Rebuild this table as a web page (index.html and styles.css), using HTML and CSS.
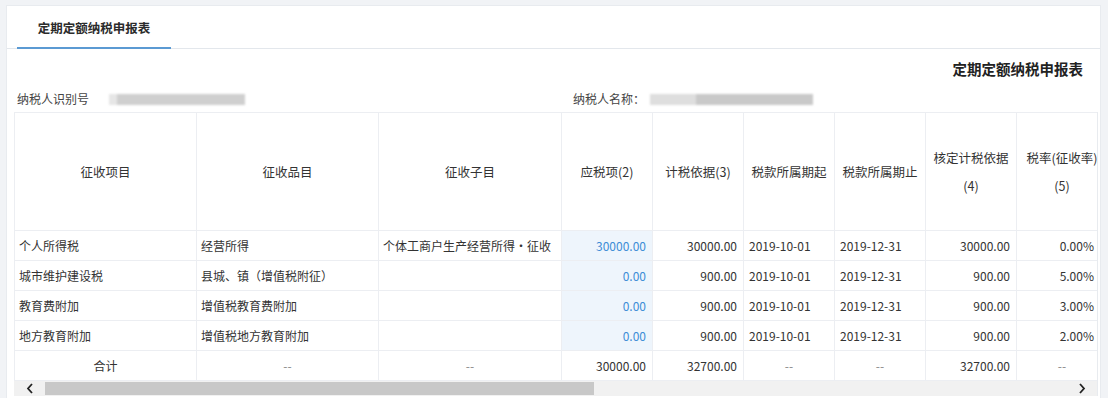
FILE: index.html
```html
<!DOCTYPE html>
<html lang="zh-CN">
<head>
<meta charset="utf-8">
<title>定期定额纳税申报表</title>
<link rel="stylesheet" href="styles.css">
</head>
<body>
<div class="card">
  <div class="tabbar">
    <div class="tab">定期定额纳税申报表</div>
  </div>
  <div class="title-row">定期定额纳税申报表</div>
  <div class="info-row">
    <div class="info info-id"><span>纳税人识别号</span><span class="mask mask-id"><i class="m1"></i><i class="m2"></i></span></div>
    <div class="info info-name"><span>纳税人名称：</span><span class="mask mask-name"><i class="m1"></i><i class="m2"></i></span></div>
  </div>
  <div class="grid-wrap">
    <div class="grid-clip">
      <table class="grid">
        <colgroup>
          <col class="c-wide"><col class="c-wide"><col class="c-wide2">
          <col class="c-num"><col class="c-num"><col class="c-num"><col class="c-num"><col class="c-num"><col class="c-num">
        </colgroup>
        <thead>
          <tr>
            <th>征收项目</th>
            <th>征收品目</th>
            <th>征收子目</th>
            <th>应税项(2)</th>
            <th>计税依据(3)</th>
            <th>税款所属期起</th>
            <th>税款所属期止</th>
            <th class="two">核定计税依据<br>(4)</th>
            <th class="two">税率(征收率)<br>(5)</th>
          </tr>
        </thead>
        <tbody>
          <tr>
            <td>个人所得税</td><td>经营所得</td><td class="clip">个体工商户生产经营所得・征收</td>
            <td class="num edit">30000.00</td><td class="num">30000.00</td>
            <td class="date">2019-10-01</td><td class="date">2019-12-31</td>
            <td class="num">30000.00</td><td class="num last">0.00%</td>
          </tr>
          <tr>
            <td>城市维护建设税</td><td>县城、镇（增值税附征）</td><td></td>
            <td class="num edit">0.00</td><td class="num">900.00</td>
            <td class="date">2019-10-01</td><td class="date">2019-12-31</td>
            <td class="num">900.00</td><td class="num last">5.00%</td>
          </tr>
          <tr>
            <td>教育费附加</td><td>增值税教育费附加</td><td></td>
            <td class="num edit">0.00</td><td class="num">900.00</td>
            <td class="date">2019-10-01</td><td class="date">2019-12-31</td>
            <td class="num">900.00</td><td class="num last">3.00%</td>
          </tr>
          <tr>
            <td>地方教育附加</td><td>增值税地方教育附加</td><td></td>
            <td class="num edit">0.00</td><td class="num">900.00</td>
            <td class="date">2019-10-01</td><td class="date">2019-12-31</td>
            <td class="num">900.00</td><td class="num last">2.00%</td>
          </tr>
          <tr class="total">
            <td class="center">合计</td><td class="center dash">--</td><td class="center dash">--</td>
            <td class="num">30000.00</td><td class="num">32700.00</td>
            <td class="center dash">--</td><td class="center dash">--</td>
            <td class="num">32700.00</td><td class="center dash">--</td>
          </tr>
        </tbody>
      </table>
    </div>
    <div class="hscroll">
      <span class="arrow"><svg width="8" height="11" viewBox="0 0 8 11"><path d="M6 1 L2 5.5 L6 10" fill="none" stroke="#222" stroke-width="1.8"/></svg></span>
      <div class="track"><div class="thumb"></div></div>
      <span class="arrow"><svg width="8" height="11" viewBox="0 0 8 11"><path d="M2 1 L6 5.5 L2 10" fill="none" stroke="#222" stroke-width="1.8"/></svg></span>
    </div>
  </div>
</div>
</body>
</html>
```

FILE: styles.css
```css
html, body {
  margin: 0;
  padding: 0;
  height: 398px;
  overflow: hidden;
  background: #f1f3f6;
  font-family: "Noto Sans CJK SC", "Noto Sans", sans-serif;
  color: #333;
}

.card {
  margin: 5px 7px 0 6px;
  height: 393px;
  background: #fff;
  border: 1px solid #e8ebef;
  border-bottom: none;
  box-sizing: border-box;
  padding: 0 3px 0 7px;
}

.tabbar {
  display: flex;
  border-bottom: 1px solid #e3e7ec;
  height: 42px;
  margin-left: -7px;
  margin-right: -3px;
  padding-left: 10px;
}

.tab {
  width: 154px;
  box-sizing: border-box;
  padding-top: 3px;
  height: 43px;
  line-height: 38px;
  text-align: center;
  font-size: 12.5px;
  font-weight: bold;
  color: #2b2b2b;
  border-bottom: 2px solid #5b9ad3;
}

.title-row {
  height: 40px;
  line-height: 40px;
  text-align: right;
  padding-right: 14px;
  font-size: 14.5px;
  font-weight: bold;
  color: #222;
}

.info-row {
  display: flex;
  height: 20px;
  line-height: 20px;
  font-size: 12px;
  color: #444;
}

.info {
  display: flex;
  align-items: center;
}

.info-id {
  width: 556px;
  padding-left: 3px;
}

.mask {
  display: flex;
  height: 11px;
  filter: blur(1px);
}

.mask i {
  display: block;
  height: 11px;
}

.mask-id {
  margin-left: 20px;
}
.mask-id .m1 { width: 8px; background: #e6e6e6; }
.mask-id .m2 { width: 128px; background: #cfcfcf; }

.mask-name {
  margin-left: 5px;
}
.mask-name .m1 { width: 46px; background: #dedede; }
.mask-name .m2 { width: 117px; background: #c9c9c9; }

.grid-wrap {
  margin-top: 3px;
  width: 1083px;
  border-right: 1px solid #e8ebef;
}

.grid-clip {
  overflow: hidden;
}

.grid {
  border-collapse: collapse;
  table-layout: fixed;
  width: 1093px;
  font-size: 12px;
}

.c-wide { width: 182px; }
.c-wide2 { width: 183px; }
.c-num { width: 91px; }

.grid th,
.grid td {
  border: 1px solid #eceef2;
  padding: 0 4px;
  white-space: nowrap;
  overflow: hidden;
}

.grid th {
  height: 117px;
  font-weight: normal;
  font-size: 12.5px;
  color: #333;
  text-align: center;
  line-height: 28px;
}

.grid td {
  height: 29px;
  line-height: 29px;
  color: #333;
}

.grid td.clip {
  text-overflow: clip;
}

.grid td.num {
  text-align: right;
  padding-right: 6px;
}

.grid td.num.last {
  padding-right: 13px;
}

.grid td.date {
  padding-left: 5px;
}

.grid td.center {
  text-align: center;
}

.grid td.dash {
  color: #888;
}

.grid td.edit {
  background: #eef5fc;
  color: #3d8dd6;
}

.hscroll {
  display: flex;
  align-items: center;
  height: 15px;
  background: #f1f1f1;
}

.arrow {
  width: 31px;
  height: 15px;
  display: flex;
  align-items: center;
  justify-content: center;
}

.track {
  flex: 1;
  height: 13px;
}

.thumb {
  width: 549px;
  height: 13px;
  background: #c8c8c8;
}
```
